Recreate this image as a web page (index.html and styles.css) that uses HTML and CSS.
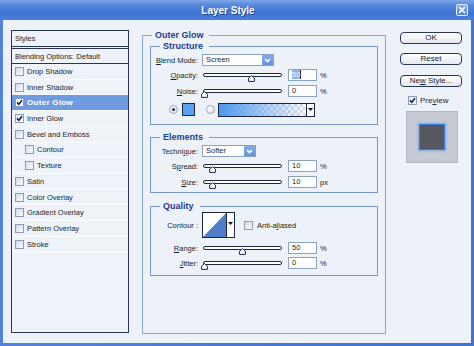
FILE: index.html
```html
<!DOCTYPE html>
<html>
<head>
<meta charset="utf-8">
<title>Layer Style</title>
<link rel="stylesheet" href="styles.css">
</head>
<body>
<div class="window">
  <div class="titlebar">
    <div class="title">Layer Style</div>
    <div class="close"><svg width="8" height="8" viewBox="0 0 8 8"><path d="M1 1L7 7M7 1L1 7" stroke="#fff" stroke-width="1.6"/></svg></div>
  </div>
  <div class="client">
    <div class="styles">
      <div class="styles-head">Styles</div>
      <div class="styles-blend">Blending Options: Default</div>
      <div class="item"><span class="cb"></span>Drop Shadow</div>
      <div class="item"><span class="cb"></span>Inner Shadow</div>
      <div class="item active"><span class="cb on"><svg width="7" height="7" viewBox="0 0 7 7"><path d="M1 3.4L2.8 5.3L6 1.2" fill="none" stroke="#14204a" stroke-width="1.6"/></svg></span>Outer Glow</div>
      <div class="item"><span class="cb on"><svg width="7" height="7" viewBox="0 0 7 7"><path d="M1 3.4L2.8 5.3L6 1.2" fill="none" stroke="#14204a" stroke-width="1.6"/></svg></span>Inner Glow</div>
      <div class="item"><span class="cb"></span>Bevel and Emboss</div>
      <div class="item sub"><span class="cb"></span>Contour</div>
      <div class="item sub"><span class="cb"></span>Texture</div>
      <div class="item"><span class="cb"></span>Satin</div>
      <div class="item"><span class="cb"></span>Color Overlay</div>
      <div class="item"><span class="cb"></span>Gradient Overlay</div>
      <div class="item"><span class="cb"></span>Pattern Overlay</div>
      <div class="item"><span class="cb"></span>Stroke</div>
    </div>

    <fieldset class="group outer">
      <legend>Outer Glow</legend>

      <fieldset class="group sub-group structure">
        <legend>Structure</legend>
        <div class="row r-blend">
          <span class="lbl"><u>B</u>lend Mode:</span>
          <div class="select w-blend"><span class="sel-text">Screen</span><span class="sel-btn"><svg width="7" height="5" viewBox="0 0 7 5"><path d="M1 1L3.5 3.6L6 1" fill="none" stroke="#fff" stroke-width="1.5"/></svg></span></div>
        </div>
        <div class="row r-opacity">
          <span class="lbl"><u>O</u>pacity:</span>
          <div class="slider"><span class="track"></span><svg class="thumb" style="left:45.5px" width="7" height="7" viewBox="0 0 7 7"><path d="M3.5 0.6L6.4 3.1V6.4H0.6V3.1Z" fill="#fff" stroke="#1d2842"/></svg></div>
          <span class="num"><span class="selected">50</span></span>
          <span class="unit">%</span>
        </div>
        <div class="row r-noise">
          <span class="lbl"><u>N</u>oise:</span>
          <div class="slider"><span class="track"></span><svg class="thumb" style="left:-1.5px" width="7" height="7" viewBox="0 0 7 7"><path d="M3.5 0.6L6.4 3.1V6.4H0.6V3.1Z" fill="#fff" stroke="#1d2842"/></svg></div>
          <span class="num">0</span>
          <span class="unit">%</span>
        </div>
        <div class="row r-color">
          <span class="radio on"></span>
          <span class="swatch"></span>
          <span class="radio r2"></span>
          <div class="grad"><span class="grad-fill"></span><span class="grad-btn"><svg width="5" height="3" viewBox="0 0 5 3"><path d="M0 0H5L2.5 3Z" fill="#111"/></svg></span></div>
        </div>
      </fieldset>

      <fieldset class="group sub-group elements">
        <legend>Elements</legend>
        <div class="row r-tech">
          <span class="lbl">Techni<u>q</u>ue:</span>
          <div class="select w-tech"><span class="sel-text">Softer</span><span class="sel-btn"><svg width="7" height="5" viewBox="0 0 7 5"><path d="M1 1L3.5 3.6L6 1" fill="none" stroke="#fff" stroke-width="1.5"/></svg></span></div>
        </div>
        <div class="row r-spread">
          <span class="lbl">S<u>p</u>read:</span>
          <div class="slider"><span class="track"></span><svg class="thumb" style="left:6.5px" width="7" height="7" viewBox="0 0 7 7"><path d="M3.5 0.6L6.4 3.1V6.4H0.6V3.1Z" fill="#fff" stroke="#1d2842"/></svg></div>
          <span class="num">10</span>
          <span class="unit">%</span>
        </div>
        <div class="row r-size">
          <span class="lbl"><u>S</u>ize:</span>
          <div class="slider"><span class="track"></span><svg class="thumb" style="left:6.5px" width="7" height="7" viewBox="0 0 7 7"><path d="M3.5 0.6L6.4 3.1V6.4H0.6V3.1Z" fill="#fff" stroke="#1d2842"/></svg></div>
          <span class="num">10</span>
          <span class="unit">px</span>
        </div>
      </fieldset>

      <fieldset class="group sub-group quality">
        <legend>Quality</legend>
        <div class="row r-contour">
          <span class="lbl">Contour :</span>
          <div class="contour">
            <span class="contour-pic"><svg width="23" height="24" viewBox="0 0 23 24"><path d="M0 24L23 0V24Z" fill="#4f7ec6"/></svg></span>
            <span class="contour-btn"><svg width="5" height="3" viewBox="0 0 5 3"><path d="M0 0H5L2.5 3Z" fill="#111"/></svg></span>
          </div>
          <span class="cb aa"></span>
          <span class="aa-lbl">Anti-a<u>l</u>iased</span>
        </div>
        <div class="row r-range">
          <span class="lbl"><u>R</u>ange:</span>
          <div class="slider"><span class="track"></span><svg class="thumb" style="left:36.5px" width="7" height="7" viewBox="0 0 7 7"><path d="M3.5 0.6L6.4 3.1V6.4H0.6V3.1Z" fill="#fff" stroke="#1d2842"/></svg></div>
          <span class="num">50</span>
          <span class="unit">%</span>
        </div>
        <div class="row r-jitter">
          <span class="lbl"><u>J</u>itter:</span>
          <div class="slider"><span class="track"></span><svg class="thumb" style="left:-1.5px" width="7" height="7" viewBox="0 0 7 7"><path d="M3.5 0.6L6.4 3.1V6.4H0.6V3.1Z" fill="#fff" stroke="#1d2842"/></svg></div>
          <span class="num">0</span>
          <span class="unit">%</span>
        </div>
      </fieldset>
    </fieldset>

    <div class="side">
      <div class="btn b-ok">OK</div>
      <div class="btn b-reset">Reset</div>
      <div class="btn b-new">Ne<u>w</u> Style...</div>
      <div class="pv-row"><span class="cb on"><svg width="7" height="7" viewBox="0 0 7 7"><path d="M1 3.4L2.8 5.3L6 1.2" fill="none" stroke="#14204a" stroke-width="1.6"/></svg></span><span class="pv-lbl">Pre<u>v</u>iew</span></div>
      <div class="pv"><span class="pv-inner"></span></div>
    </div>
  </div>
</div>
</body>
</html>
```

FILE: styles.css
```css
* { box-sizing: border-box; }
html, body { margin: 0; padding: 0; }
body {
  width: 474px;
  height: 346px;
  overflow: hidden;
  background: #4a7cd4;
  font-family: "Liberation Sans", Arial, sans-serif;
  font-size: 7.5px;
  color: #1b1f2c;
}
u { text-decoration: underline; text-underline-offset: 1px; }

.window {
  width: 474px;
  height: 346px;
  display: flex;
  flex-direction: column;
  background: linear-gradient(90deg, #5283d8, #3f72d1);
}

.titlebar {
  height: 20px;
  flex: none;
  display: flex;
  align-items: center;
  padding-right: 6px;
  background: linear-gradient(#7fa7ea 0%, #5688dd 25%, #3f74d6 65%, #4b80da 100%);
}
.title {
  flex: 1;
  text-align: center;
  color: #fff;
  font-weight: bold;
  font-size: 10px;
  text-shadow: 1px 1px 0 #23458f;
}
.close {
  width: 12px;
  height: 12px;
  border: 1px solid #e6eefa;
  border-radius: 2px;
  background: linear-gradient(#86aeea, #4f83d9);
  display: flex;
  align-items: center;
  justify-content: center;
}

.client {
  flex: 1;
  margin: 0 3px 3px 3px;
  background: #edf1f8;
  display: flex;
  align-items: flex-start;
  padding: 10px 0 0 8px;
}

/* left styles list */
.styles {
  width: 118px;
  height: 303px;
  flex: none;
  border: 1px solid #283450;
  background: #eef2f9;
  display: flex;
  flex-direction: column;
}
.styles-head {
  height: 16px;
  border-bottom: 1px solid #283450;
  margin-bottom: 1px;
  padding-left: 3px;
  display: flex;
  align-items: center;
}
.styles-blend {
  height: 16px;
  border-top: 1px solid #283450;
  border-bottom: 1px solid #283450;
  padding-left: 3px;
  display: flex;
  align-items: center;
}
.item {
  height: 15.73px;
  flex: none;
  display: flex;
  align-items: center;
  padding-left: 3px;
  border-bottom: 1px solid #fbfcfe;
}
.item.sub { padding-left: 13px; }
.item .cb { margin-right: 3px; }
.item.active {
  background: #6f9ce1;
  color: #fff;
  font-weight: bold;
  font-size: 8px;
  letter-spacing: 0.3px;
}
.item.active .cb { background: #fff; }

.cb {
  width: 9px;
  height: 9px;
  flex: none;
  border: 1px solid #8e9cb5;
  background: linear-gradient(135deg, #d3dae6, #fbfcfe);
  display: inline-flex;
  align-items: center;
  justify-content: center;
}
.cb.on { background: linear-gradient(135deg, #e4e9f1, #fff); }

/* groups */
.group {
  margin: 0;
  min-width: 0;
  border: 1px solid #7898c9;
}
.group legend {
  padding: 0 5px 0 3px;
  line-height: 11px;
  font-size: 9px;
  font-weight: bold;
  color: #1d3c96;
}
.outer {
  margin-left: 13px;
  width: 244px;
  height: 304px;
  flex: none;
  padding: 0 7px;
  border-color: #8aa6d2;
}
.outer > legend { margin-left: 2px; }
.sub-group { padding: 0; }
.sub-group legend { margin-left: 9px; padding-right: 6px; }
.structure { padding-bottom: 8px; }
.elements { margin-top: 7px; padding-bottom: 4px; }
.quality { margin-top: 8px; padding-bottom: 6px; }

.row {
  display: flex;
  align-items: center;
  height: 12px;
}
.lbl {
  width: 47px;
  flex: none;
  text-align: right;
  white-space: nowrap;
}
.r-blend { margin-top: 2px; }
.r-opacity { margin-top: 3px; }
.r-noise { margin-top: 4px; }
.r-color { margin-top: 6px; height: 13px; padding-left: 18px; }
.r-tech { margin-top: 2px; }
.r-spread { margin-top: 3px; }
.r-size { margin-top: 4px; }
.r-contour { height: 26px; }
.r-range { margin-top: 4px; }
.r-jitter { margin-top: 3px; }

.select {
  display: flex;
  height: 12px;
  margin-left: 4px;
  border: 1px solid #8aa2c4;
  background: #fff;
}
.w-blend { width: 72px; }
.w-tech { width: 54px; }
.sel-text {
  flex: 1;
  padding-left: 3px;
  line-height: 10px;
}
.sel-btn {
  width: 11px;
  background: linear-gradient(#86abe6, #6393dc);
  display: flex;
  align-items: center;
  justify-content: center;
}

.slider {
  position: relative;
  width: 82px;
  height: 12px;
  margin-left: 4px;
  flex: none;
}
.track {
  position: absolute;
  left: 1px;
  right: 2px;
  top: 4px;
  height: 4px;
  border: 1px solid #1d2842;
  border-radius: 2px;
  background: #fff;
}
.thumb {
  position: absolute;
  top: 6px;
}

.num {
  width: 29px;
  height: 12px;
  margin-left: 4px;
  flex: none;
  border: 1px solid #8aa2c4;
  background: #fff;
  padding-left: 3px;
  line-height: 10px;
}
.selected {
  background: #8eb2ec;
  color: #f2f6ff;
  border-right: 1px solid #1b1f2c;
}
.unit { margin-left: 3px; }

.radio {
  width: 9px;
  height: 9px;
  flex: none;
  border-radius: 50%;
  border: 1px solid #9ea9bd;
  background: radial-gradient(circle at 35% 35%, #fff, #d3d9e4);
  display: flex;
  align-items: center;
  justify-content: center;
}
.radio.on::after {
  content: "";
  width: 3px;
  height: 3px;
  border-radius: 50%;
  background: #1d2a52;
}
.radio.r2 { margin-left: 11px; }
.swatch {
  width: 13px;
  height: 13px;
  margin-left: 4px;
  border: 1px solid #1d2740;
  background: #58a3f4;
}
.grad {
  width: 97px;
  height: 14px;
  margin-left: 3px;
  border: 1px solid #1d2740;
  display: flex;
}
.grad-fill {
  flex: 1;
  background:
    linear-gradient(90deg, #4e98f0, rgba(78, 152, 240, 0)),
    repeating-conic-gradient(#dadde3 0 25%, #fff 0 50%) 0 0 / 6px 6px;
}
.grad-btn {
  width: 8px;
  border-left: 1px solid #1d2740;
  background: #fff;
  display: flex;
  align-items: center;
  justify-content: center;
}

.contour {
  width: 33px;
  height: 26px;
  margin-left: 4px;
  border: 1px solid #1d2740;
  display: flex;
}
.contour-pic {
  width: 23px;
  background: #fff;
  display: flex;
}
.contour-btn {
  flex: 1;
  border-left: 1px solid #1d2740;
  background: #fff;
  display: flex;
  justify-content: center;
  padding-top: 9px;
}
.cb.aa { margin-left: 9px; }
.aa-lbl { margin-left: 4px; }

/* right side */
.side {
  margin-left: 14px;
  width: 62px;
  flex: none;
  padding-top: 2px;
  display: flex;
  flex-direction: column;
}
.btn {
  height: 12px;
  border: 1px solid #2a3656;
  border-radius: 4px;
  background: linear-gradient(#ffffff, #e3e8f0);
  text-align: center;
  line-height: 10px;
  font-size: 8px;
}
.b-reset { margin-top: 9px; }
.b-new { margin-top: 10px; }
.pv-row {
  margin-top: 9px;
  margin-left: 8px;
  display: flex;
  align-items: center;
  height: 9px;
}
.pv-lbl { margin-left: 3px; font-size: 8px; }
.pv {
  width: 52px;
  height: 52px;
  margin: 6px 0 0 6px;
  background: #c6cad3;
  border: 1px solid #aeb6c5;
  display: flex;
  align-items: center;
  justify-content: center;
}
.pv-inner {
  width: 26px;
  height: 26px;
  background: #55595f;
  border: 1px solid #3d7ae0;
  box-shadow: 0 0 2px 1px #7aacf0;
}
```
